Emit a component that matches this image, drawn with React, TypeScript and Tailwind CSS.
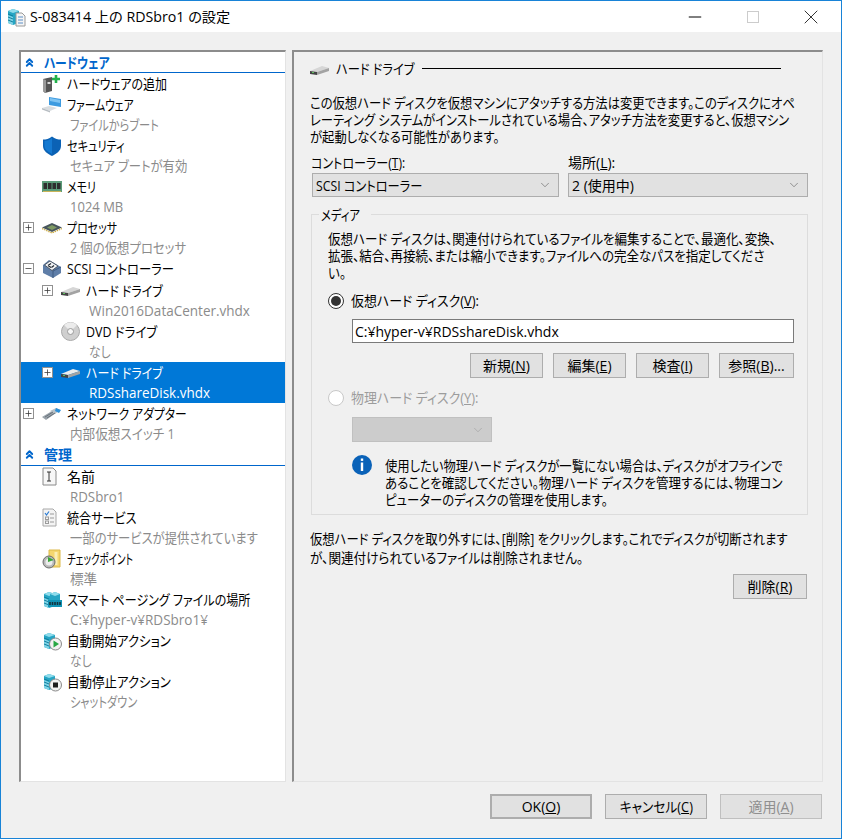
import React from 'react';
import { ChevronDown, ChevronsUp, Minus, Plus, X } from 'lucide-react';

const ServerTower = () => (
  <>
    <path d="M2 4 L7 2 L13 4 V16 L7 18 L2 16 Z" fill="#25a5c4" />
    <path d="M7 2 L13 4 L7 6 L2 4 Z" fill="#8fdcec" />
    <path d="M2 8 L7 10 V18 L2 16 Z" fill="#7fd3e6" />
    <path d="M2 7 L7 9 M2 10 L7 12 M2 13 L7 15" stroke="#0f7f9e" strokeWidth="1" />
  </>
);

const HardDriveIcon = ({ light }: { light?: boolean }) => (
  <svg width="19" height="12" viewBox="0 0 19 12">
    <path d="M0 7 L12 2 L19 4 L7 8 Z" fill={light ? '#ececec' : '#d6d6d6'} />
    <path d="M0 7 L7 8 V11 L0 10 Z" fill="#444" />
    <path d="M7 8 L19 4 V7 L7 11 Z" fill="#a3a3a3" />
    <rect x="2" y="8" width="2" height="1" fill="#5fc35f" />
  </svg>
);

const icons: Record<string, React.ReactNode> = {
  add: (
    <svg width="20" height="20" viewBox="0 0 20 20">
      <path d="M1 5 L10 3 V17 L3 19 L1 17 Z" fill="#555" />
      <path d="M1 5 L4 6 V19 L1 17 Z" fill="#9a9a9a" />
      <rect x="5.5" y="8" width="3" height="2" fill="#d8d8d8" />
      <path d="M14 1 V9 M10 5 H18" stroke="#22b14c" strokeWidth="2.6" />
    </svg>
  ),
  firmware: (
    <svg width="20" height="18" viewBox="0 0 20 18">
      <path d="M7 1 L19 3 V11 L7 9 Z" fill="#3d9be0" />
      <path d="M8 2 L18 4 V7 L8 5 Z" fill="#7fc4f2" />
      <path d="M0 12 L7 10 L15 12 L8 15 Z" fill="#d9dde0" />
      <path d="M0 12 L8 15 V16.500 L0 13.500 Z" fill="#b6bcc1" />
    </svg>
  ),
  shield: (
    <svg width="20" height="20" viewBox="0 0 20 20">
      <path d="M10 0.500 C7 3 4 3.500 1 3.500 V10 C1 15 6 18 10 20 C14 18 19 15 19 10 V3.500 C16 3.500 13 3 10 0.500 Z" fill="#0b62b5" />
      <path d="M10 2 C8 4 5 5 2.500 5 V10 C2.500 13 5 15.500 10 18 Z" fill="#1479d1" />
    </svg>
  ),
  memory: (
    <svg width="20" height="14" viewBox="0 0 20 14">
      <rect x="0" y="1" width="20" height="11" fill="#5b9b78" />
      <rect x="1.500" y="3" width="3.500" height="6" fill="#2e2e2e" />
      <rect x="6" y="3" width="3.500" height="6" fill="#2e2e2e" />
      <rect x="10.500" y="3" width="3.500" height="6" fill="#2e2e2e" />
      <rect x="15" y="3" width="3.500" height="6" fill="#2e2e2e" />
      <path d="M1 11.500 H19" stroke="#c9b458" strokeWidth="1" />
    </svg>
  ),
  cpu: (
    <svg width="20" height="12" viewBox="0 0 20 12">
      <path d="M0 5.500 L10 1 L20 5.500 L10 10 Z" fill="#48555c" />
      <path d="M5 5.500 L10 3 L15 5.500 L10 8 Z" fill="#7f9a63" />
      <path d="M0 6.500 L10 11 L20 6.500" fill="none" stroke="#c9a93f" strokeWidth="1.200" strokeDasharray="1.500 0.800" />
    </svg>
  ),
  scsi: (
    <svg width="20" height="20" viewBox="0 0 20 20">
      <path d="M1 6 L7 1 L19 8 V14 L11 19 L1 14 Z" fill="#5f7ea8" />
      <path d="M2.500 6 L8 2 L16 7 L10 11.500 Z" fill="#f1f3f6" stroke="#39414d" strokeWidth="0.800" />
      <path d="M6 6.500 L9 4.500 M6 6.500 L9 8.500 M12 6.500 L9.500 8.500" stroke="#20262e" strokeWidth="1.200" fill="none" />
      <path d="M11 19 V12 L19 8" fill="none" stroke="#3f5a80" strokeWidth="1" />
    </svg>
  ),
  dvd: (
    <svg width="19" height="19" viewBox="0 0 19 19">
      <circle cx="9.500" cy="9.500" r="9" fill="#cfcfcf" stroke="#a9a9a9" />
      <path d="M9.500 9.500 L3 3 A9 9 0 0 1 16 3 Z" fill="#ececec" />
      <circle cx="9.500" cy="9.500" r="3" fill="#f7f7f7" stroke="#9a9a9a" />
    </svg>
  ),
  network: (
    <svg width="20" height="14" viewBox="0 0 20 14">
      <path d="M0 10 L10 4 L14 6 L4 13 Z" fill="#9aa3ab" />
      <path d="M8 4 L14 1 L18 3 L13 7 Z" fill="#b9c2c9" />
      <path d="M14 1 L19 3 L17 6 L13 4 Z" fill="#2d8fd6" />
      <path d="M3 10 L11 5 M5 11 L13 6" stroke="#6a737b" strokeWidth="1" />
    </svg>
  ),
  name: (
    <svg width="16" height="19" viewBox="0 0 16 19">
      <path d="M1 1 H11 L14 4 V18 H1 Z" fill="#f7f7f7" stroke="#8a8a8a" />
      <path d="M5 5 H9 M7 5 V14 M5 14 H9" stroke="#333" strokeWidth="1" fill="none" />
    </svg>
  ),
  integration: (
    <svg width="16" height="19" viewBox="0 0 16 19">
      <path d="M1 1 H11 L14 4 V18 H1 Z" fill="#f4f4f4" stroke="#a8a8a8" />
      <path d="M3 5 L4.500 7 L7 3.500" stroke="#2b7cd3" strokeWidth="1.200" fill="none" />
      <path d="M8 6 H12 M8 10 H12 M8 14 H12" stroke="#9a9a9a" />
      <rect x="3.500" y="9" width="3" height="2.500" fill="none" stroke="#9a9a9a" />
      <rect x="3.500" y="13" width="3" height="2.500" fill="none" stroke="#9a9a9a" />
    </svg>
  ),
  checkpoint: (
    <svg width="20" height="20" viewBox="0 0 20 20">
      <path d="M7 1 H18 V18 H7 Z" fill="#f5d66f" stroke="#dcb94a" />
      <path d="M14 3 V16" stroke="#fbeeb5" strokeWidth="3" />
      <circle cx="7" cy="13" r="6" fill="#b9b9b9" stroke="#6d6d6d" />
      <circle cx="7" cy="13" r="3.500" fill="#ececec" />
      <path d="M6 8 L12 11 L6 13 Z" fill="#3aa53a" />
    </svg>
  ),
  paging: (
    <svg width="20" height="20" viewBox="0 0 20 20">
      <ServerTower />
      <g transform="translate(6 1)">
        <path d="M2 3 L7 1 L12 3 V9 H2 Z" fill="#25a5c4" />
        <path d="M7 1 L12 3 L7 5 L2 3 Z" fill="#8fdcec" />
      </g>
      <rect x="6" y="10" width="14" height="7" fill="#0f93b5" />
      <path d="M8 12 V15 M10.500 12 V15 M13 12 V15 M15.500 12 V15 M18 12 V15" stroke="#12323d" strokeWidth="1.600" />
    </svg>
  ),
  start: (
    <svg width="20" height="20" viewBox="0 0 20 20">
      <ServerTower />
      <circle cx="13.500" cy="13" r="6" fill="#f2f2f2" stroke="#8a8a8a" />
      <path d="M11.500 9.500 L17 13 L11.500 16.500 Z" fill="#27a844" />
    </svg>
  ),
  stop: (
    <svg width="20" height="20" viewBox="0 0 20 20">
      <ServerTower />
      <circle cx="13.500" cy="13" r="6" fill="#f2f2f2" stroke="#8a8a8a" />
      <rect x="11" y="10.500" width="5" height="5" fill="#1d1d1d" />
    </svg>
  ),
};

// Condenses a run of text sideways, the Japanese UI font here is much narrower than Noto
const Fit = ({ className = '', children }: { className?: string; children: React.ReactNode }) => (
  <span className={`inline-block origin-left whitespace-nowrap ${className}`}>{children}</span>
);

const Expander = ({ open }: { open?: boolean }) => (
  <span className="flex h-[11px] w-[11px] items-center justify-center border border-[#919191] bg-white">
    {open ? <Minus size={9} strokeWidth={2} color="#333" /> : <Plus size={9} strokeWidth={2} color="#333" />}
  </span>
);

type TreeRowProps = {
  title: string;
  sub?: string;
  icon: React.ReactNode;
  level?: number;
  expander?: 'plus' | 'minus';
  selected?: boolean;
  fit?: string;
  subFit?: string;
  height?: string;
};

const TreeRow = ({ title, sub, icon, level = 1, expander, selected, fit = '', subFit = '', height }: TreeRowProps) => (
  <div className={`${height ?? (sub ? 'h-[41px]' : 'h-[21px]')} ${level === 2 ? 'pl-[21px]' : 'pl-[2px]'} ${selected ? 'bg-[#0078d7] text-white' : 'text-black'}`}>
    <div className="flex h-[21px] items-center">
      <span className="flex w-[19px] shrink-0 items-center">
        {expander && <Expander open={expander === 'minus'} />}
      </span>
      <span className="flex w-[25px] shrink-0 items-center">{icon}</span>
      <Fit className={fit}>{title}</Fit>
    </div>
    {sub && (
      <div className={`h-[20px] pl-[47px] leading-[20px] ${selected ? 'text-white' : 'text-[#8b8b8b]'}`}>
        <Fit className={subFit}>{sub}</Fit>
      </div>
    )}
  </div>
);

const SectionHeader = ({ title, fit = '', height = 'h-[21px]' }: { title: string; fit?: string; height?: string }) => (
  <div className={`flex items-center border-b border-[#0066cc] pl-[2px] font-bold text-[#0066cc] ${height}`}>
    <span className="flex w-[21px] items-center">
      <ChevronsUp size={13} strokeWidth={3.5} color="#0066cc" />
    </span>
    <Fit className={fit}>{title}</Fit>
  </div>
);

const Btn = ({ children, className = '' }: { children: React.ReactNode; className?: string }) => (
  <div className={`flex h-[25px] items-center justify-center border border-[#adadad] bg-[#e1e1e1] whitespace-nowrap ${className}`}>
    {children}
  </div>
);

const Combo = ({ children, className = '' }: { children: React.ReactNode; className?: string }) => (
  <div className={`flex h-[24px] items-center justify-between border border-[#adadad] bg-[#e1e1e1] pl-[3px] pr-[6px] ${className}`}>
    {children}
    <ChevronDown size={14} strokeWidth={1} color="#555" />
  </div>
);

const App = () => {
  return (
    <div className="flex h-[839px] w-[842px] flex-col overflow-hidden border border-[#1883d7] bg-[#f0f0f0] font-['Open_Sans','Noto_Sans_CJK_JP',sans-serif] text-[14px] leading-[17px] text-black [font-feature-settings:'palt']">
      {/* title bar */}
      <div className="flex h-[31px] shrink-0 items-center bg-white pl-[5px]">
        <svg width="20" height="20" viewBox="0 0 20 20" className="mr-[4px]">
          <ServerTower />
          <path d="M10 6 H16 L19 9 V19 H10 Z" fill="#f5f5f5" stroke="#9a9a9a" />
          <path d="M12 10 H17 M12 13 H17 M12 16 H17" stroke="#5b8fc7" />
        </svg>
        <Fit className="scale-x-[1.015]">S-083414 上の RDSbro1 の設定</Fit>
        <div className="ml-auto mr-px flex items-center">
          <span className="flex w-[58px] justify-center"><Minus size={20} strokeWidth={1.2} color="#000" /></span>
          <span className="flex w-[58px] justify-center"><span className="h-[12px] w-[12px] border border-[#cccccc]" /></span>
          <span className="flex w-[58px] justify-center"><X size={24} strokeWidth={0.8} color="#000" /></span>
        </div>
      </div>

      {/* body */}
      <div className="flex gap-[6px] pl-[18px] pt-[18px]">
        <div className="h-[732px] w-[267px] border-b border-l-2 border-r border-t-2 border-b-[#e3e3e3] border-l-[#8c8c8c] border-r-[#e3e3e3] border-t-[#8c8c8c] bg-white">
          <SectionHeader title="ハードウェア" fit="scale-x-[0.84]" />
          <TreeRow title="ハードウェアの追加" icon={icons.add} fit="scale-x-[0.855]" />
          <TreeRow title="ファームウェア" sub="ファイルからブート" icon={icons.firmware} fit="scale-x-[0.77]" subFit="scale-x-[0.8]" />
          <TreeRow title="セキュリティ" sub="セキュア ブートが有効" icon={icons.shield} fit="scale-x-[0.795]" subFit="scale-x-[0.88]" />
          <TreeRow title="メモリ" sub="1024 MB" icon={icons.memory} fit="scale-x-[0.78]" subFit="scale-x-[0.93]" />
          <TreeRow title="プロセッサ" sub="2 個の仮想プロセッサ" icon={icons.cpu} expander="plus" fit="scale-x-[0.78]" subFit="scale-x-[0.885]" />
          <TreeRow title="SCSI コントローラー" icon={icons.scsi} expander="minus" fit="scale-x-[0.88]" height="h-[22px]" />
          <TreeRow title="ハード ドライブ" sub="Win2016DataCenter.vhdx" icon={<HardDriveIcon />} level={2} expander="plus" fit="scale-x-[0.855]" subFit="scale-x-[0.965]" />
          <TreeRow title="DVD ドライブ" sub="なし" icon={icons.dvd} level={2} fit="scale-x-[0.89]" subFit="scale-x-[0.84]" />
          <TreeRow title="ハード ドライブ" sub="RDSshareDisk.vhdx" icon={<HardDriveIcon light />} level={2} expander="plus" selected fit="scale-x-[0.855]" subFit="scale-x-[0.96]" />
          <TreeRow title="ネットワーク アダプター" sub="内部仮想スイッチ 1" icon={icons.network} expander="plus" fit="scale-x-[0.84]" subFit="scale-x-[0.9]" />
          <SectionHeader title="管理" height="h-[22px]" />
          <TreeRow title="名前" sub="RDSbro1" icon={icons.name} subFit="scale-x-[0.95]" />
          <TreeRow title="統合サービス" sub="一部のサービスが提供されています" icon={icons.integration} fit="scale-x-[0.865]" subFit="scale-x-[0.88]" />
          <TreeRow title="チェックポイント" sub="標準" icon={icons.checkpoint} fit="scale-x-[0.68]" subFit="scale-x-[0.97]" />
          <TreeRow title="スマート ページング ファイルの場所" sub="C:¥hyper-v¥RDSbro1¥" icon={icons.paging} fit="scale-x-[0.86]" subFit="scale-x-[0.965]" />
          <TreeRow title="自動開始アクション" sub="なし" icon={icons.start} fit="scale-x-[0.89]" subFit="scale-x-[0.84]" />
          <TreeRow title="自動停止アクション" sub="シャットダウン" icon={icons.stop} fit="scale-x-[0.89]" subFit="scale-x-[0.8]" />
        </div>

        <div className="h-[732px] w-[531px] border-b border-l-2 border-r border-t-2 border-b-[#e3e3e3] border-l-[#8c8c8c] border-r-[#e3e3e3] border-t-[#8c8c8c] pl-[16px] pr-[13px] pt-[8px]">
          <div className="flex h-[17px] items-center">
            <span className="mt-[2px] flex"><HardDriveIcon /></span>
            <span className="ml-[7px] w-[86px]"><Fit className="scale-x-[0.875]">ハード ドライブ</Fit></span>
            <span className="h-px w-[359px] bg-black" />
          </div>

          <div className="mt-[17px]">
            <p><Fit className="scale-x-[0.88]">この仮想ハード ディスクを仮想マシンにアタッチする方法は変更できます。このディスクにオペ</Fit></p>
            <p><Fit className="scale-x-[0.88]">レーティング システムがインストールされている場合、アタッチ方法を変更すると、仮想マシン</Fit></p>
            <p><Fit className="scale-x-[0.88]">が起動しなくなる可能性があります。</Fit></p>
          </div>

          <div className="mt-[9px] flex gap-[9px] pl-[2px]">
            <div className="w-[247px]">
              <label className="block"><Fit className="-ml-px scale-x-[0.86]">コントローラー(<u>T</u>):</Fit></label>
              <Combo className="mt-[2px]"><Fit className="scale-x-[0.875]">SCSI コントローラー</Fit></Combo>
            </div>
            <div className="w-[240px]">
              <label className="block"><Fit>場所(<u>L</u>):</Fit></label>
              <Combo className="mt-[2px]"><Fit>2 (使用中)</Fit></Combo>
            </div>
          </div>

          <fieldset className="ml-px mt-[10px] h-[308px] w-[497px] min-w-0 border border-[#dcdcdc] pl-[16px] pr-[13px]">
            <legend className="-ml-[9px] px-[2px] leading-[15px]"><Fit className="scale-x-[0.81]">メディア</Fit></legend>
            <div className="mt-[8px]">
              <p><Fit className="scale-x-[0.894]">仮想ハード ディスクは、関連付けられているファイルを編集することで、最適化、変換、</Fit></p>
              <p><Fit className="scale-x-[0.894]">拡張、結合、再接続、または縮小できます。ファイルへの完全なパスを指定してくださ</Fit></p>
              <p><Fit className="scale-x-[0.894]">い。</Fit></p>
            </div>

            <div className="mt-[11px] flex h-[17px] items-center">
              <span className="flex h-[16px] w-[16px] items-center justify-center rounded-full border border-[#333] bg-white">
                <span className="h-[10px] w-[10px] rounded-full bg-[#333]" />
              </span>
              <span className="ml-[7px]"><Fit className="scale-x-[0.925]">仮想ハード ディスク(<u>V</u>):</Fit></span>
            </div>
            <div className="ml-[24px] mt-[10px] flex h-[24px] w-[442px] items-center border border-[#7a7a7a] bg-white pl-[2px]">
              C:¥hyper-v¥RDSshareDisk.vhdx
            </div>
            <div className="ml-[142px] mt-[10px] flex gap-[10px]">
              <Btn className="w-[73px]">新規(<u>N</u>)</Btn>
              <Btn className="w-[73px]">編集(<u>E</u>)</Btn>
              <Btn className="w-[73px]">検査(<u>I</u>)</Btn>
              <Btn className="w-[75px]">参照(<u>B</u>)...</Btn>
            </div>

            <div className="mt-[11px] flex h-[17px] items-center text-[#9c9c9c]">
              <span className="h-[16px] w-[16px] rounded-full border border-[#c8c8c8] bg-white" />
              <span className="ml-[7px]"><Fit className="scale-x-[0.925]">物理ハード ディスク(<u>Y</u>):</Fit></span>
            </div>
            <div className="ml-[24px] mt-[11px] flex h-[25px] w-[140px] items-center justify-end border border-[#c0c0c0] bg-[#cccccc] pr-[6px]">
              <ChevronDown size={14} strokeWidth={1} color="#999" />
            </div>

            <div className="ml-[24px] mt-[15px] flex">
              <svg width="20" height="20" viewBox="0 0 20 20" className="-mt-[2px] shrink-0">
                <circle cx="10" cy="10" r="10" fill="#0a62b8" />
                <rect x="8.800" y="3.500" width="2.400" height="2.400" fill="#fff" />
                <rect x="8.800" y="7.500" width="2.400" height="8.500" fill="#fff" />
              </svg>
              <div className="ml-[13px]">
                <p><Fit className="scale-x-[0.88]">使用したい物理ハード ディスクが一覧にない場合は、ディスクがオフラインで</Fit></p>
                <p><Fit className="scale-x-[0.895]">あることを確認してください。物理ハード ディスクを管理するには、物理コン</Fit></p>
                <p><Fit className="scale-x-[0.885]">ピューターのディスクの管理を使用します。</Fit></p>
              </div>
            </div>
          </fieldset>

          <div className="mt-[14px] leading-[19px]">
            <p><Fit className="scale-x-[0.88]">仮想ハード ディスクを取り外すには、[削除] をクリックします。これでディスクが切断されます</Fit></p>
            <p><Fit className="scale-x-[0.9]">が、関連付けられているファイルは削除されません。</Fit></p>
          </div>
          <div className="mt-[7px] flex justify-end pr-[2px]">
            <Btn className="w-[74px]">削除(<u>R</u>)</Btn>
          </div>
        </div>
      </div>

      {/* dialog buttons */}
      <div className="mt-[12px] flex justify-end gap-[13px] pr-[19px]">
        <Btn className="w-[102px] border-2 border-[#0078d7]">OK(<u>O</u>)</Btn>
        <Btn className="w-[102px]"><span className="inline-block scale-x-[0.91]">キャンセル(<u>C</u>)</span></Btn>
        <Btn className="w-[102px] border-[#bfbfbf] bg-[#cccccc] text-[#8f8f8f]">適用(<u>A</u>)</Btn>
      </div>
    </div>
  );
};

export default App;
